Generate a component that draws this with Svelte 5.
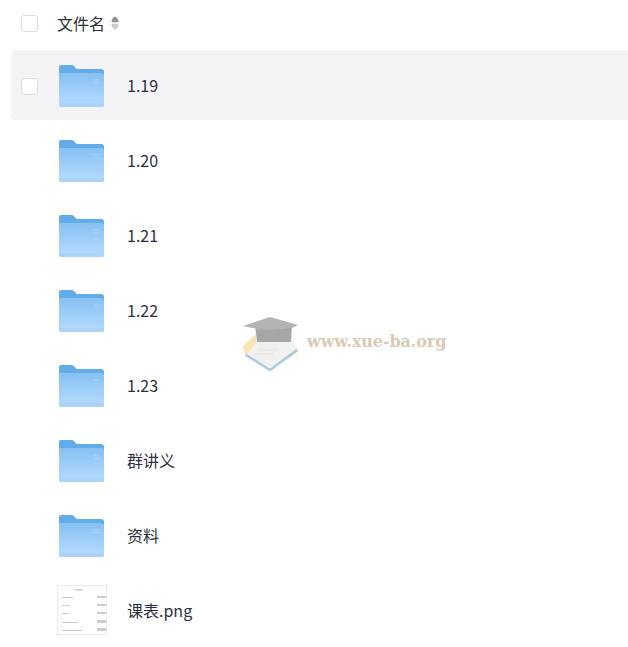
<script>
  const rows = [
    { name: '1.19', hover: true },
    { name: '1.20' },
    { name: '1.21' },
    { name: '1.22' },
    { name: '1.23' },
    { name: '群讲义' },
    { name: '资料' }
  ];
</script>

<div class="page">
  <div class="head">
    <span class="check"></span>
    <span class="title">文件名</span>
    <svg class="sort" width="8" height="14" viewBox="0 0 8 14">
      <path d="M4 .5C5 .5 7.500 3.500 7.500 5c0 .8-.5 1.200-1.200 1.200H1.700C1 6.200.5 5.800.5 5 .5 3.500 3 .5 4 .5z" fill="#8e9197" />
      <path d="M4 13.500C5 13.500 7.500 10.500 7.500 9c0-.8-.5-1.200-1.200-1.200H1.700C1 7.800.5 8.200.5 9c0 1.500 2.500 4.500 3.500 4.500z" fill="#c9cbcf" />
    </svg>
  </div>
  <div class="list">
    {#each rows as row, i}
      <div class="row" class:hover={row.hover}>
        {#if row.hover}<span class="check nudge"></span>{:else}<span class="spacer"></span>{/if}
        <svg class="folder" width="45" height="42" viewBox="0 0 46 42" preserveAspectRatio="none">
          <defs>
            <linearGradient id="front{i}" x1="0" y1="0" x2="0" y2="1">
              <stop offset="0" stop-color="#87c0f3" />
              <stop offset="1" stop-color="#b7dcff" />
            </linearGradient>
          </defs>
          <path d="M0 2a2 2 0 0 1 2-2h11a3 3 0 0 1 2.200 1l2.800 3h25a3 3 0 0 1 3 3v8H0z" fill="#62ade9" />
          <path d="M0 8h43a3 3 0 0 1 3 3v29a2 2 0 0 1-2 2H2a2 2 0 0 1-2-2z" fill="url(#front{i})" />
          <path d="M0 38h46v2a2 2 0 0 1-2 2H2a2 2 0 0 1-2-2z" fill="#a9d3f9" />
          <path d="M35 15h6M35 18h6" stroke="#aed3f3" stroke-width="1" />
        </svg>
        <span class="name">{row.name}</span>
      </div>
    {/each}
    <div class="row">
      <span class="spacer"></span>
      <svg class="thumb" width="50" height="50" viewBox="0 0 50 50">
        <rect x="0.500" y="0.500" width="49" height="49" fill="#fff" stroke="#e8e9eb" />
        <g fill="#c9cacd">
          <rect x="18" y="4" width="8" height="1.500" />
          <rect x="5" y="12" width="11" height="1" />
          <rect x="40" y="11" width="9" height="2" />
          <rect x="5" y="20" width="8" height="1" />
          <rect x="40" y="19" width="9" height="2" />
          <rect x="5" y="28" width="7" height="1" />
          <rect x="40" y="27" width="9" height="2" />
          <rect x="5" y="37" width="16" height="1" />
          <rect x="40" y="35" width="9" height="3" />
          <rect x="5" y="45" width="20" height="1" />
          <rect x="40" y="43" width="9" height="3" />
        </g>
      </svg>
      <span class="name">课表.png</span>
    </div>
  </div>

  <div class="mark">
    <svg width="58" height="58" viewBox="0 0 58 58">
      <path d="M1 32 14 20v12L4 44z" fill="#fbe3b4" />
      <path d="M46 24l11 13-12 9z" fill="#fbe3b4" />
      <path d="M4 41 16 27h34l6 7-27 20z" fill="#f1f2f0" />
      <path d="M15 36h22M12 40h20" stroke="#dfe3e4" stroke-width="1" />
      <path d="M4 41 28 56 55 36" fill="none" stroke="#a9cbe2" stroke-width="2.500" />
      <path d="M13 11h37l-1 17H15z" fill="#a7a7a7" />
      <path d="M1 12 28 3l28 8-6 3-22 2-13-1z" fill="#b4b4b4" />
    </svg>
    <span class="url">www.xue-ba.org</span>
  </div>
</div>

<style>
  :global(body) {
    margin: 0;
    background: #fff;
  }
  .page {
    position: relative;
    width: 628px;
    height: 647px;
    overflow: hidden;
    font-family: "Noto Sans CJK SC", "Noto Sans", sans-serif;
    color: #2c3040;
  }
  .head {
    display: flex;
    align-items: center;
    height: 46px;
    padding-left: 21px;
  }
  .title {
    margin-left: 19px;
    font-size: 16px;
    line-height: 24px;
  }
  .sort {
    margin-left: 6px;
  }
  .check {
    flex: none;
    box-sizing: border-box;
    width: 17px;
    height: 17px;
    background: #fff;
    border: 1px solid #dcdde0;
    border-radius: 3px;
  }
  .nudge {
    margin-top: 2px;
  }
  .spacer {
    flex: none;
    width: 17px;
  }
  .list {
    margin-top: 4px;
    margin-left: 11px;
  }
  .row {
    display: flex;
    align-items: center;
    height: 70px;
    margin-bottom: 5px;
    padding-left: 10px;
    border-radius: 4px 0 0 4px;
  }
  .hover {
    background: #f4f4f6;
  }
  .folder {
    flex: none;
    margin-left: 21px;
    margin-top: 2px;
  }
  .thumb {
    flex: none;
    margin-left: 19px;
  }
  .name {
    margin-left: 23px;
    font-size: 16px;
    line-height: 24px;
  }
  .thumb + .name {
    margin-left: 20px;
  }
  .mark {
    position: absolute;
    left: 242px;
    top: 314px;
    display: flex;
    align-items: center;
    gap: 7px;
  }
  .url {
    margin-bottom: 4px;
    font-family: "DejaVu Serif", "Liberation Serif", serif;
    font-weight: 700;
    font-size: 16px;
    letter-spacing: -0.100px;
    color: #d6cbb3;
  }
</style>
